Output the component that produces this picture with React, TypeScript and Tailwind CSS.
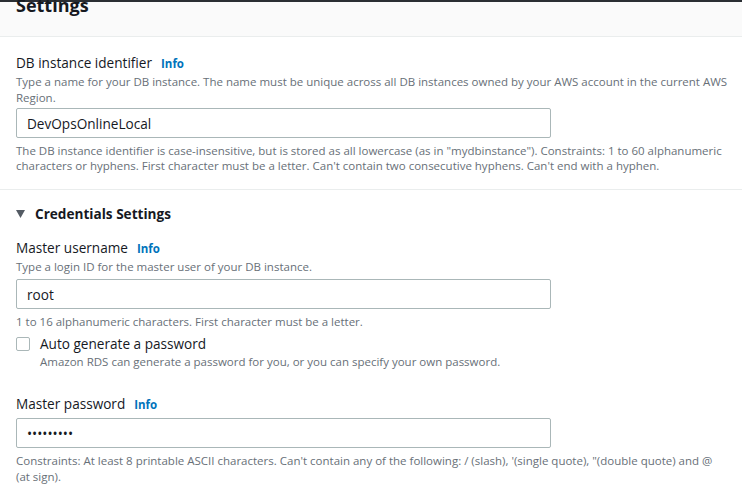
import { useState } from "react";

function Info() {
  return <span className="ml-[9px] text-[11.5px] font-bold text-[#0073bb]">Info</span>;
}

function Label({ text }: { text: string }) {
  return (
    <div className="flex items-baseline text-[13.6px] leading-[20px] text-[#16191f]">
      <span>{text}</span>
      <Info />
    </div>
  );
}

function Hint({ children }: { children: React.ReactNode }) {
  return <p className="text-[11.5px] leading-[16px] text-[#687078]">{children}</p>;
}

function TextBox({ value, type = "text" }: { value: string; type?: string }) {
  const [v, setV] = useState(value);
  return (
    <input
      type={type}
      value={v}
      onChange={(e) => setV(e.target.value)}
      className="block h-[30px] w-[535px] rounded-[2px] border border-[#aab7b8] bg-white px-[10px] text-[13.6px] text-[#16191f] outline-none"
    />
  );
}

export default function App() {
  const [auto, setAuto] = useState(false);

  return (
    <div
      className="h-[489px] w-[742px] overflow-hidden bg-white"
      style={{ fontFamily: '"Open Sans", "Liberation Sans", sans-serif' }}
    >
      {/* Header */}
      <div className="h-[37px] border-t-2 border-b border-t-[#2a2e33] border-b-[#eaeded] bg-[#fafafa] px-4">
        <h2 className="mt-[-12px] text-[18px] font-bold leading-[30px] text-[#16191f]">Settings</h2>
      </div>

      {/* DB identifier */}
      <div className="border-b border-[#eaeded] pl-4 pr-2 pt-[16px] pb-[16px]">
        <Label text="DB instance identifier" />
        <Hint>
          Type a name for your DB instance. The name must be unique across all DB instances owned by your AWS account in the current AWS Region.
        </Hint>
        <div className="mt-[2px] mb-[5px]">
          <TextBox value="DevOpsOnlineLocal" />
        </div>
        <p className="text-[11.5px] leading-[15px] text-[#687078]">
          The DB instance identifier is case-insensitive, but is stored as all lowercase (as in "mydbinstance"). Constraints: 1 to 60 alphanumeric characters or hyphens. First character must be a letter. Can't contain two consecutive hyphens. Can't end with a hyphen.
        </p>
      </div>

      {/* Credentials */}
      <div className="pl-4 pr-2 pt-[14px]">
        <div className="flex items-center gap-[10px] text-[13.6px] font-bold leading-[20px] text-[#16191f]">
          <svg width="9" height="8" viewBox="0 0 9 8">
            <path d="M0 0h9L4.5 8z" fill="#545b64" />
          </svg>
          <span>Credentials Settings</span>
        </div>

        <div className="mt-[14px]">
          <Label text="Master username" />
          <Hint>Type a login ID for the master user of your DB instance.</Hint>
          <div className="mt-[4px] mb-[5px]">
            <TextBox value="root" />
          </div>
          <Hint>1 to 16 alphanumeric characters. First character must be a letter.</Hint>
        </div>

        <label className="mt-[4px] flex gap-[10px]">
          <input
            type="checkbox"
            checked={auto}
            onChange={(e) => setAuto(e.target.checked)}
            className="mt-[3px] h-[14px] w-[14px] appearance-none rounded-[2px] border border-[#aab7b8] bg-white"
          />
          <div>
            <div className="text-[13.6px] leading-[20px] text-[#16191f]">Auto generate a password</div>
            <p className="text-[11.5px] leading-[15px] text-[#687078]">
              Amazon RDS can generate a password for you, or you can specify your own password.
            </p>
          </div>
        </label>

        <div className="mt-[25px]">
          <Label text="Master password" />
          <div className="mt-[3px] mb-[5px]">
            <TextBox value="secretpwd" type="password" />
          </div>
          <p className="pr-[12px] text-[11.5px] leading-[16px] text-[#687078]">
            Constraints: At least 8 printable ASCII characters. Can't contain any of the following: / (slash), '(single quote), "(double quote) and @ (at sign).
          </p>
        </div>
      </div>
    </div>
  );
}
